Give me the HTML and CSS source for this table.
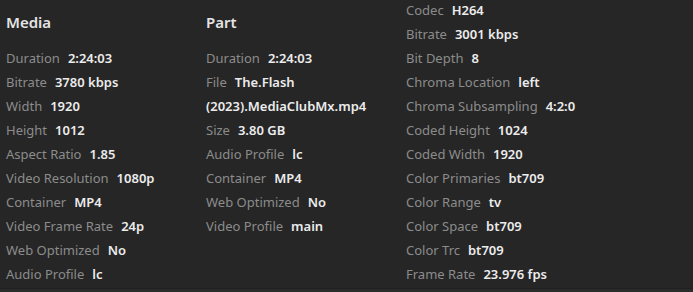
FILE: index.html
```html
<!DOCTYPE html>
<html>
<head>
<meta charset="utf-8">
<link rel="stylesheet" href="styles.css">
</head>
<body>
<div class="panel">
  <section class="col">
    <h2 class="title">Media</h2>
    <div class="row"><span class="k">Duration</span><span class="v">2:24:03</span></div>
    <div class="row"><span class="k">Bitrate</span><span class="v">3780 kbps</span></div>
    <div class="row"><span class="k">Width</span><span class="v">1920</span></div>
    <div class="row"><span class="k">Height</span><span class="v">1012</span></div>
    <div class="row"><span class="k">Aspect Ratio</span><span class="v">1.85</span></div>
    <div class="row"><span class="k">Video Resolution</span><span class="v">1080p</span></div>
    <div class="row"><span class="k">Container</span><span class="v">MP4</span></div>
    <div class="row"><span class="k">Video Frame Rate</span><span class="v">24p</span></div>
    <div class="row"><span class="k">Web Optimized</span><span class="v">No</span></div>
    <div class="row"><span class="k">Audio Profile</span><span class="v">lc</span></div>
  </section>
  <section class="col">
    <h2 class="title">Part</h2>
    <div class="row"><span class="k">Duration</span><span class="v">2:24:03</span></div>
    <div class="row"><span class="k">File</span><span class="v">The.Flash</span> <span class="v">(2023).MediaClubMx.mp4</span></div>
    <div class="row"><span class="k">Size</span><span class="v">3.80 GB</span></div>
    <div class="row"><span class="k">Audio Profile</span><span class="v">lc</span></div>
    <div class="row"><span class="k">Container</span><span class="v">MP4</span></div>
    <div class="row"><span class="k">Web Optimized</span><span class="v">No</span></div>
    <div class="row"><span class="k">Video Profile</span><span class="v">main</span></div>
  </section>
  <section class="col col-stream">
    <div class="row"><span class="k">Codec</span><span class="v">H264</span></div>
    <div class="row"><span class="k">Bitrate</span><span class="v">3001 kbps</span></div>
    <div class="row"><span class="k">Bit Depth</span><span class="v">8</span></div>
    <div class="row"><span class="k">Chroma Location</span><span class="v">left</span></div>
    <div class="row"><span class="k">Chroma Subsampling</span><span class="v">4:2:0</span></div>
    <div class="row"><span class="k">Coded Height</span><span class="v">1024</span></div>
    <div class="row"><span class="k">Coded Width</span><span class="v">1920</span></div>
    <div class="row"><span class="k">Color Primaries</span><span class="v">bt709</span></div>
    <div class="row"><span class="k">Color Range</span><span class="v">tv</span></div>
    <div class="row"><span class="k">Color Space</span><span class="v">bt709</span></div>
    <div class="row"><span class="k">Color Trc</span><span class="v">bt709</span></div>
    <div class="row"><span class="k">Frame Rate</span><span class="v">23.976 fps</span></div>
  </section>
</div>
<div class="footer"></div>
</body>
</html>
```
FILE: styles.css
```css
html, body {
  margin: 0;
  padding: 0;
  background: #262626;
  height: 100%;
  overflow: hidden;
}
body {
  font-family: "Noto Sans", "Open Sans", sans-serif;
  font-size: 13px;
  color: #e6e6e6;
  position: relative;
}
.panel {
  display: flex;
  height: 288px;
  overflow: hidden;
}
.col {
  width: 200px;
  padding-left: 6px;
  box-sizing: border-box;
}
.col-stream {
  margin-top: -2px;
  width: 287px;
}
.title {
  margin: 0;
  height: 46px;
  line-height: 44px;
  font-size: 15px;
  font-weight: 600;
  color: #e4e4e4;
}
.row {
  line-height: 24px;
}
.k {
  color: #8c8c8c;
  margin-right: 8px;
}
.v {
  color: #ececec;
  font-weight: 600;
}
.footer {
  position: absolute;
  left: 0;
  right: 0;
  bottom: 0;
  height: 3px;
  background: #2c2c2c;
  border-top: 1px solid #1f1f1f;
}
```
